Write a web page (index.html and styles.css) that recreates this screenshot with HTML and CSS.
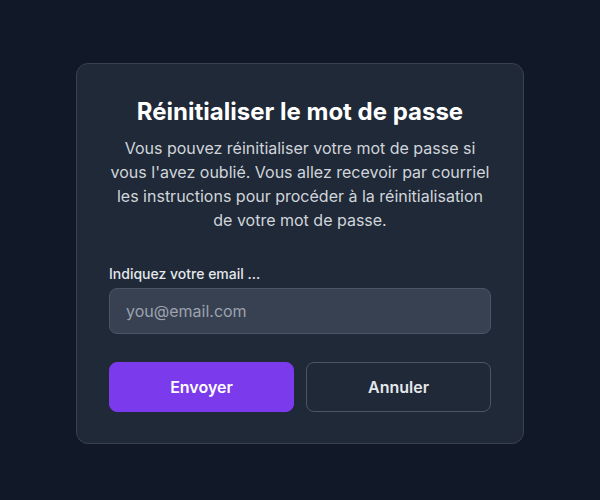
FILE: index.html
```html
<!DOCTYPE html>
<html lang="fr">
<head>
<meta charset="utf-8">
<link rel="stylesheet" href="styles.css">
</head>
<body>
<main class="page">
  <section class="card">
    <h1 class="title">Réinitialiser le mot de passe</h1>
    <p class="desc">Vous pouvez réinitialiser votre mot de passe si vous l'avez oublié. Vous allez recevoir par courriel les instructions pour procéder à la réinitialisation de votre mot de passe.</p>
    <form class="form">
      <label class="label" for="email">Indiquez votre email ...</label>
      <input class="input" id="email" type="email" placeholder="you@email.com">
      <div class="actions">
        <button type="button" class="btn btn-primary">Envoyer</button>
        <button type="button" class="btn btn-secondary">Annuler</button>
      </div>
    </form>
  </section>
</main>
</body>
</html>
```
FILE: styles.css
```css
* { box-sizing: border-box; }
html, body { margin: 0; padding: 0; }
body {
  background: #111827;
  font-family: Inter, "Noto Sans", sans-serif;
  color: #f9fafb;
  width: 600px;
  height: 500px;
}
.page {
  display: flex;
  justify-content: center;
  padding-top: 63px;
}
.card {
  width: 448px;
  background: #1f2937;
  border: 1px solid #374151;
  border-radius: 12px;
  padding: 32px;
  padding-bottom: 31px;
}
.title {
  margin: 0;
  font-size: 24px;
  line-height: 32px;
  font-weight: 700;
  text-align: center;
  color: #ffffff;
}
.desc {
  margin: 8px 0 0;
  font-size: 16px;
  line-height: 24px;
  text-align: center;
  color: #d1d5db;
}
.form {
  display: flex;
  flex-direction: column;
  margin-top: 32px;
}
.label {
  font-size: 14px;
  line-height: 20px;
  font-weight: 500;
  color: #e5e7eb;
}
.input {
  margin-top: 4px;
  height: 46px;
  padding: 0 16px;
  font-family: inherit;
  font-size: 16px;
  color: #f9fafb;
  background: #374151;
  border: 1px solid #4b5563;
  border-radius: 8px;
  outline: none;
}
.input::placeholder { color: #9ca3af; }
.actions {
  display: flex;
  gap: 12px;
  margin-top: 28px;
}
.btn {
  flex: 1;
  height: 50px;
  font-family: inherit;
  font-size: 16px;
  font-weight: 600;
  border-radius: 8px;
  cursor: pointer;
}
.btn-primary {
  background: #7c3aed;
  color: #ffffff;
  border: 1px solid #7c3aed;
}
.btn-secondary {
  background: transparent;
  color: #e5e7eb;
  border: 1px solid #4b5563;
}
```
